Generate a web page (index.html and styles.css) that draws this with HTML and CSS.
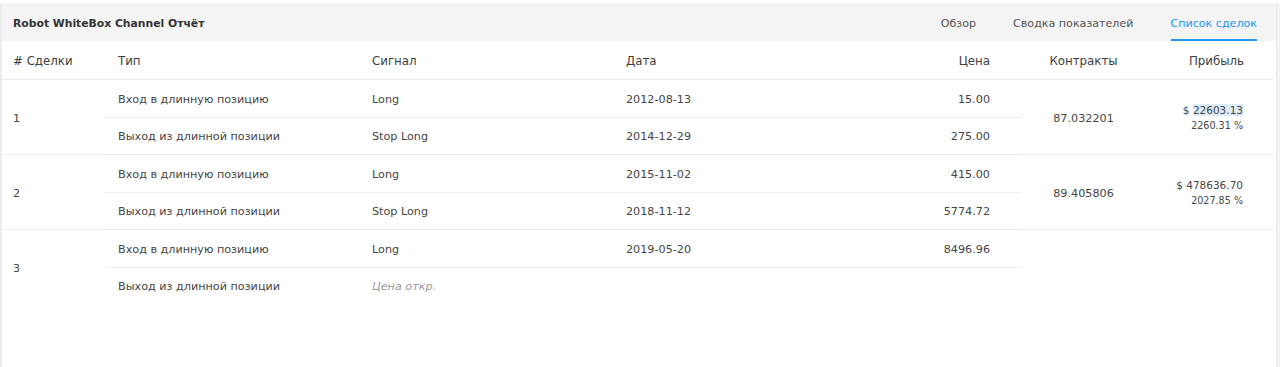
FILE: index.html
```html
<!DOCTYPE html>
<html lang="ru">
<head>
<meta charset="utf-8">
<title>Robot WhiteBox Channel Отчёт</title>
<link rel="stylesheet" href="styles.css">
</head>
<body>
<div class="frame">
  <header class="topbar">
    <div class="title">Robot WhiteBox Channel Отчёт</div>
    <nav class="tabs">
      <span class="tab">Обзор</span>
      <span class="tab">Сводка показателей</span>
      <span class="tab active">Список сделок</span>
    </nav>
  </header>
  <table class="trades">
    <colgroup>
      <col class="c-num"><col class="c-type"><col class="c-sig"><col class="c-date"><col class="c-price"><col class="c-qty"><col class="c-profit">
    </colgroup>
    <thead>
      <tr>
        <th class="num">#&nbsp;Сделки</th>
        <th>Тип</th>
        <th>Сигнал</th>
        <th>Дата</th>
        <th class="price">Цена</th>
        <th class="qty">Контракты</th>
        <th class="profit">Прибыль</th>
      </tr>
    </thead>
    <tbody>
      <tr class="first">
        <td class="num" rowspan="2">1</td>
        <td>Вход в длинную позицию</td>
        <td>Long</td>
        <td>2012-08-13</td>
        <td class="price">15.00</td>
        <td class="qty" rowspan="2">87.032201</td>
        <td class="profit" rowspan="2"><div>$&nbsp;<span class="sel">22603.13</span></div><div class="pct">2260.31 %</div></td>
      </tr>
      <tr class="second">
        <td>Выход из длинной позиции</td>
        <td>Stop Long</td>
        <td>2014-12-29</td>
        <td class="price">275.00</td>
      </tr>
      <tr class="first">
        <td class="num" rowspan="2">2</td>
        <td>Вход в длинную позицию</td>
        <td>Long</td>
        <td>2015-11-02</td>
        <td class="price">415.00</td>
        <td class="qty" rowspan="2">89.405806</td>
        <td class="profit" rowspan="2"><div>$&nbsp;478636.70</div><div class="pct">2027.85 %</div></td>
      </tr>
      <tr class="second">
        <td>Выход из длинной позиции</td>
        <td>Stop Long</td>
        <td>2018-11-12</td>
        <td class="price">5774.72</td>
      </tr>
      <tr class="first">
        <td class="num" rowspan="2">3</td>
        <td>Вход в длинную позицию</td>
        <td>Long</td>
        <td>2019-05-20</td>
        <td class="price">8496.96</td>
        <td class="qty" rowspan="2"></td>
        <td class="profit" rowspan="2"></td>
      </tr>
      <tr class="second last">
        <td>Выход из длинной позиции</td>
        <td class="open">Цена откр.</td>
        <td></td>
        <td class="price"></td>
      </tr>
    </tbody>
  </table>
</div>
</body>
</html>
```
FILE: styles.css
```css
html, body {
  margin: 0;
  padding: 0;
  background: #ffffff;
}
body {
  font-family: "DejaVu Sans", Verdana, sans-serif;
  font-size: 11.2px;
  color: #454545;
}
.frame {
  margin: 3px 3px 0 0;
  height: 364px;
  border-left: 2px solid #ececec;
  border-right: 1px solid #e8e8e8;
  box-shadow: 3px 0 0 #f3f3f3;
  box-sizing: border-box;
  overflow: hidden;
}
.topbar {
  display: flex;
  align-items: stretch;
  justify-content: space-between;
  height: 38px;
  background: #f4f4f4;
}
.title {
  display: flex;
  align-items: center;
  padding: 2px 0 0 11px;
  font-weight: bold;
  color: #333;
  font-size: 10.8px;
}
.tabs {
  display: flex;
  align-items: stretch;
  gap: 37px;
  padding-right: 19px;
}
.tab {
  display: flex;
  align-items: center;
  color: #555;
  font-size: 11.1px;
  border-bottom: 2px solid transparent;
  padding-top: 4px;
}
.tab.active {
  color: #2196f3;
  border-bottom-color: #2196f3;
}
.trades {
  width: 1272px;
  border-collapse: collapse;
  table-layout: fixed;
}
.c-num { width: 103px; }
.c-type { width: 254px; }
.c-sig { width: 254px; }
.c-date { width: 254px; }
.c-price { width: 155px; }
.c-qty { width: 123px; }
.c-profit { width: 129px; }
.trades th {
  height: 36px;
  padding: 2px 13px 0;
  text-align: left;
  font-weight: normal;
  color: #3e3e3e;
  font-size: 11.8px;
  border-bottom: 1px solid #ececec;
}
.trades td {
  height: 34.5px;
  padding: 2px 13px 0;
  vertical-align: middle;
  white-space: nowrap;
}
.trades th.num, .trades td.num { padding-left: 11px; }
.trades tr.first td { border-bottom: 1px solid #efefef; }
.trades tr.second td,
.trades td.num,
.trades td.qty,
.trades td.profit { border-bottom: 1px solid #e8e8e8; }
.trades tbody tr:nth-last-child(2) td.num,
.trades tbody tr:nth-last-child(2) td.qty,
.trades tbody tr:nth-last-child(2) td.profit,
.trades tr.last td { border-bottom: none; }
.trades .price { text-align: right; padding-right: 32px; }
.trades .qty { text-align: center; }
.trades .profit { text-align: right; padding-right: 31px; font-size: 10.5px; line-height: 15px; }
.trades th.profit { font-size: 11.8px; padding-right: 30px; }
.trades .pct { font-size: 9.6px; }
.sel { background: #dcecf9; }
.trades td.open { font-style: italic; color: #9a9a9a; }
```
